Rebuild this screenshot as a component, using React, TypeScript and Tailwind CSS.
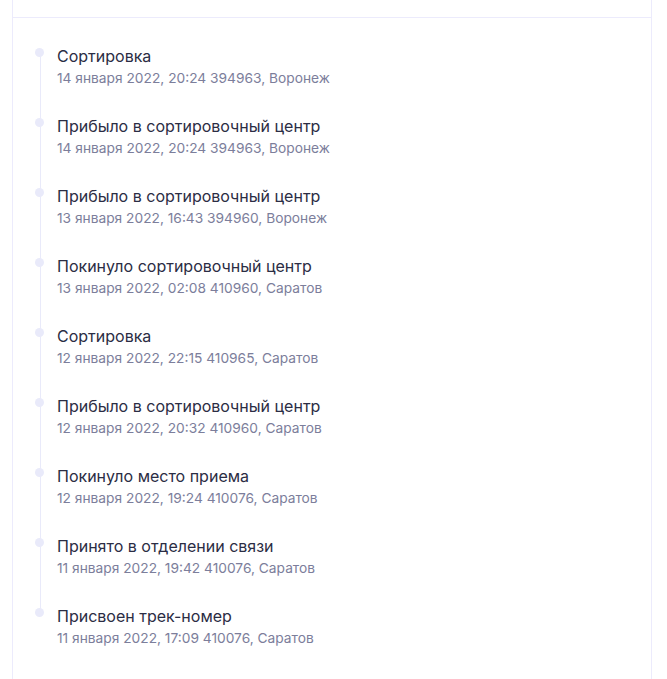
const events = [
  { title: 'Сортировка', info: '14 января 2022, 20:24 394963, Воронеж' },
  { title: 'Прибыло в сортировочный центр', info: '14 января 2022, 20:24 394963, Воронеж' },
  { title: 'Прибыло в сортировочный центр', info: '13 января 2022, 16:43 394960, Воронеж' },
  { title: 'Покинуло сортировочный центр', info: '13 января 2022, 02:08 410960, Саратов' },
  { title: 'Сортировка', info: '12 января 2022, 22:15 410965, Саратов' },
  { title: 'Прибыло в сортировочный центр', info: '12 января 2022, 20:32 410960, Саратов' },
  { title: 'Покинуло место приема', info: '12 января 2022, 19:24 410076, Саратов' },
  { title: 'Принято в отделении связи', info: '11 января 2022, 19:42 410076, Саратов' },
  { title: 'Присвоен трек-номер', info: '11 января 2022, 17:09 410076, Саратов' },
];

function App() {
  return (
    <div className="min-h-screen bg-white font-['Inter','Liberation_Sans',sans-serif]">
      <div className="ml-3 w-[640px] border-x border-[#ecebfc] bg-white">
        <div className="h-[18px] border-b border-[#ecebfc]" />
        <div className="pt-[27px] pb-6">
          {events.map((ev, i) => (
            <div key={i} className="relative flex pb-[27px] pl-[22px]">
              {i < events.length - 1 && (
                <div className="absolute left-[27px] top-[7px] h-full w-px bg-[#e9eafa]" />
              )}
              <div className="relative w-[22px] shrink-0 pt-[3px]">
                <div className="h-[9px] w-[9px] rounded-full bg-[#e9eafa]" />
              </div>
              <div>
                <div className="text-[16px] leading-[23px] text-[#2b2d44]">{ev.title}</div>
                <div className="text-[13.75px] leading-[20px] text-[#7c7e9b]">{ev.info}</div>
              </div>
            </div>
          ))}
        </div>
      </div>
    </div>
  );
}

export default App;
